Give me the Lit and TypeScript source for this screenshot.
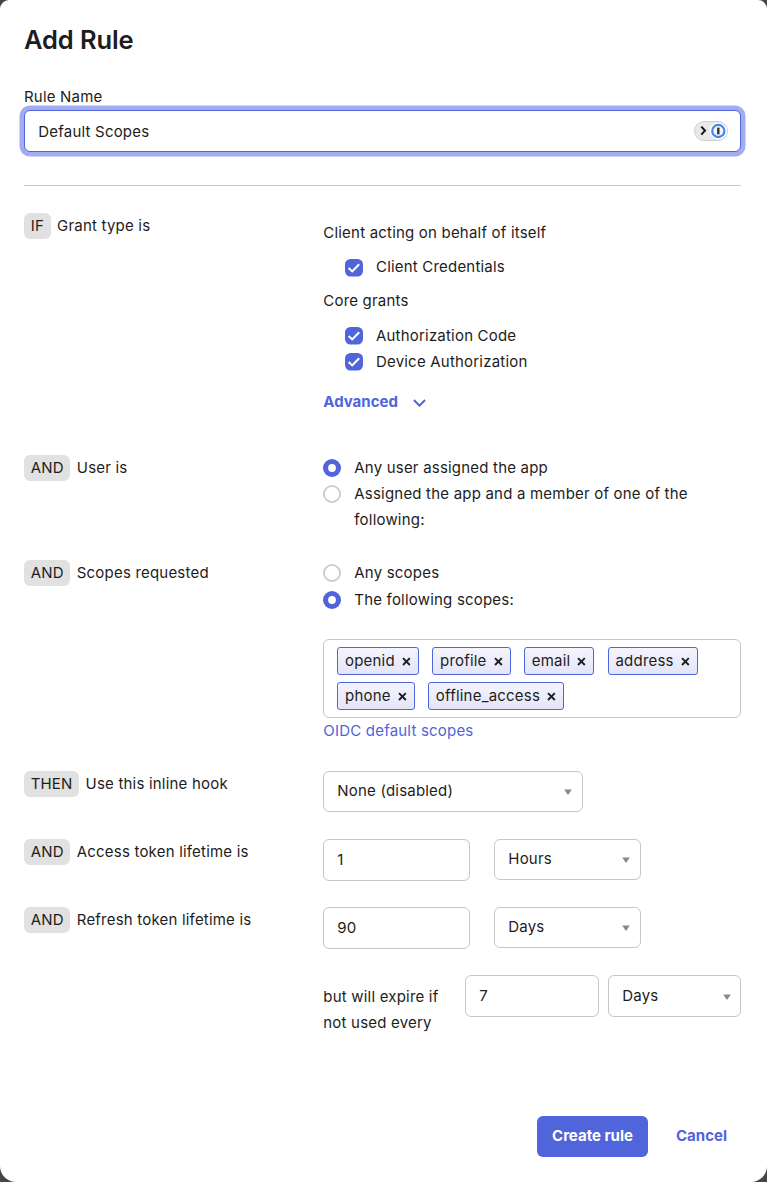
import { LitElement, html, css, svg } from "lit";
import { customElement } from "lit/decorators.js";

const check = html`<svg class="check" width="18" height="18" viewBox="0 0 18 18">
  <rect width="18" height="17.5" rx="5.5" fill="#5064dc" />
  <path d="M3.6 9 7.2 12.4 14.2 5.2" fill="none" stroke="#fff" stroke-width="2.1" />
</svg>`;

const radio = (on: boolean) => html`<svg class="radio" width="18" height="18" viewBox="0 0 18 18">
  ${on
    ? svg`<circle cx="9" cy="9" r="9" fill="#5064dc" /><circle cx="9" cy="9" r="3.9" fill="#fff" />`
    : svg`<circle cx="9" cy="9" r="8.1" fill="#fff" stroke="#cbcbcb" stroke-width="1.8" />`}
</svg>`;

const cross = html`<svg class="cross" width="9" height="9" viewBox="0 0 9 9">
  <path d="M1 1.2 7.8 8M7.8 1.2 1 8" stroke="#1d1d21" stroke-width="1.9" />
</svg>`;

const caret = html`<svg class="caret" width="8" height="6" viewBox="0 0 8 6"><path d="M.2 .5H7.8L4 6Z" fill="#888" /></svg>`;

@customElement("app-root")
export class AppRoot extends LitElement {
  static styles = css`
    :host {
      display: block;
      background: #454545;
      height: 1182px;
      overflow: hidden;
    }
    * {
      box-sizing: border-box;
    }
    .modal {
      height: 1182px;
      background: #fff;
      border-radius: 9px 9px 16px 16px;
      padding: 24px 26px 25px 24px;
      display: flex;
      flex-direction: column;
      color: #1d1d21;
      font: 400 15px/26px Inter, "Liberation Sans", sans-serif;
      letter-spacing: 0.2px;
      white-space: nowrap;
    }
    h1 {
      margin: 0;
      font-size: 25.5px;
      font-weight: 600;
      line-height: 32px;
      letter-spacing: -0.12px;
    }
    .name-label {
      margin-top: 28px;
      letter-spacing: 0.2px;
    }
    .field {
      display: flex;
      align-items: center;
      justify-content: space-between;
      border: 1px solid #c7c7c7;
      border-radius: 6px;
      height: 42px;
      padding: 0 10px 0 13.3px;
      background: #fff;
    }
    .name {
      border-color: #5064dc;
      box-shadow: 0 0 0 4.5px #a3acee;
      padding-right: 12px;
      letter-spacing: 0.2px;
      flex: none;
    }
    .name span {
      padding-top: 1px;
    }
    .rule {
      border-top: 1px solid #c9c9c9;
      margin-top: 33px;
      height: 28px;
      flex: none;
    }
    .row {
      display: grid;
      grid-template-columns: 299.3px 1fr;
      flex: none;
    }
    .grant { height: 242px; }
    .user { height: 105px; }
    .scopes { height: 211px; }
    .line { height: 68px; }
    .head {
      display: flex;
      align-items: flex-start;
      gap: 6.4px;
    }
    .badge {
      background: #e1e1e1;
      border-radius: 6px;
      padding: 0 6.8px;
      letter-spacing: 0.1px;
    }
    .col {
      display: flex;
      flex-direction: column;
      align-items: flex-start;
    }
    .client { margin-top: 7px; }
    .core { margin-top: 8px; }
    .opt {
      display: grid;
      grid-template-columns: 18px 1fr;
      column-gap: 13px;
    }
    .opt.box { padding-left: 21.7px; margin-top: 8px; }
    .opt.box.core-first { margin-top: 9px; }
    .opt.box.tight { margin-top: 0; }
    .opt.second { margin-top: 1px; }
    .check, .radio { display: block; margin-top: 4px; }
    .opt.first .check { margin-top: 5px; }
    .advanced {
      display: flex;
      align-items: center;
      gap: 15px;
      margin-top: 14px;
      color: #5064dc;
      font-weight: 700;
      letter-spacing: 0;
    }
    .advanced svg { margin-top: 1px; }
    .tags {
      width: 418px;
      height: 79px;
      margin: 26px 0 0 -0.3px;
      border: 1px solid #c7c7c7;
      border-radius: 6px;
      padding: 7px 13px;
      display: flex;
      flex-direction: column;
      gap: 7px;
    }
    .tagline { display: flex; gap: 13.2px; }
    .tag {
      display: flex;
      align-items: center;
      gap: 7px;
      height: 28px;
      padding: 0 7px;
      border: 1px solid #5064dc;
      border-radius: 3px;
      background: linear-gradient(#f4f4fe, #e4e5f8);
    }
    .cross { margin-top: 1px; }
    .link { color: #5064dc; }
    .cells { display: flex; align-items: flex-start; margin-left: -0.3px; }
    .select { height: 41px; }
    .select span { padding-bottom: 2px; }
    .caret { margin-top: 1px; }
    .w260 { width: 260px; }
    .w147 { width: 147px; }
    .w134 { width: 134px; }
    .w133 { width: 133px; height: 42px; padding-right: 9px; }
    .w133 span { padding-bottom: 0; }
    .gap { margin-left: 24px; }
    .gap9 { margin-left: 9px; }
    .expire { width: 142px; padding-top: 9px; padding-left: 0.3px; }
    .footer {
      margin-top: auto;
      display: flex;
      justify-content: flex-end;
      height: 41px;
      line-height: 40px;
      font-weight: 700;
      letter-spacing: 0;
    }
    .create {
      width: 111px;
      background: #5064dc;
      color: #fff;
      border-radius: 6px;
      text-align: center;
    }
    .cancel {
      color: #5064dc;
      width: 51px;
      margin: 0 14px 0 28px;
    }
  `;

  private head(badge: string, text: string) {
    return html`<div class="head"><span class="badge">${badge}</span><span>${text}</span></div>`;
  }

  private tag(name: string) {
    return html`<div class="tag"><span>${name}</span>${cross}</div>`;
  }

  private select(text: string, width: string) {
    return html`<div class="field select ${width}"><span>${text}</span>${caret}</div>`;
  }

  render() {
    return html`<div class="modal">
      <h1>Add Rule</h1>
      <div class="name-label">Rule Name</div>
      <div class="field name">
        <span>Default Scopes</span>
        <svg width="34" height="20" viewBox="0 0 34 20">
          <rect x=".5" y=".5" width="33" height="19" rx="9.5" fill="#e9e9e9" stroke="#cecece" />
          <path d="M7.3 5.6 11 9.6 7.3 13.6" fill="none" stroke="#111" stroke-width="2" />
          <circle cx="24.3" cy="10" r="8.6" fill="#fff" />
          <circle cx="24.3" cy="10" r="6.1" fill="#f5f5f5" stroke="#3d87f5" stroke-width="2.2" />
          <rect x="23.1" y="6.6" width="2.4" height="6.8" fill="#333" />
        </svg>
      </div>
      <div class="rule"></div>

      <div class="row grant">
        ${this.head("IF", "Grant type is")}
        <div class="col">
          <div class="client">Client acting on behalf of itself</div>
          <div class="opt box first">${check}<span>Client Credentials</span></div>
          <div class="core">Core grants</div>
          <div class="opt box core-first">${check}<span>Authorization Code</span></div>
          <div class="opt box tight">${check}<span>Device Authorization</span></div>
          <div class="advanced">
            <span>Advanced</span>
            <svg width="13" height="8" viewBox="0 0 13 8"><path d="M.9 1 6.5 6.6 12.1 1" fill="none" stroke="#5064dc" stroke-width="2" /></svg>
          </div>
        </div>
      </div>

      <div class="row user">
        ${this.head("AND", "User is")}
        <div class="col">
          <div class="opt">${radio(true)}<span>Any user assigned the app</span></div>
          <div class="opt">${radio(false)}<span>Assigned the app and a member of one of the<br />following:</span></div>
        </div>
      </div>

      <div class="row scopes">
        ${this.head("AND", "Scopes requested")}
        <div class="col">
          <div class="opt">${radio(false)}<span>Any scopes</span></div>
          <div class="opt second">${radio(true)}<span>The following scopes:</span></div>
          <div class="tags">
            <div class="tagline">${["openid", "profile", "email", "address"].map((t) => this.tag(t))}</div>
            <div class="tagline">${["phone", "offline_access"].map((t) => this.tag(t))}</div>
          </div>
          <div class="link">OIDC default scopes</div>
        </div>
      </div>

      <div class="row line">
        ${this.head("THEN", "Use this inline hook")}
        <div class="cells">${this.select("None (disabled)", "w260")}</div>
      </div>
      <div class="row line">
        ${this.head("AND", "Access token lifetime is")}
        <div class="cells">
          <div class="field w147">1</div>
          <div class="gap">${this.select("Hours", "w147")}</div>
        </div>
      </div>
      <div class="row line">
        ${this.head("AND", "Refresh token lifetime is")}
        <div class="cells">
          <div class="field w147">90</div>
          <div class="gap">${this.select("Days", "w147")}</div>
        </div>
      </div>
      <div class="row">
        <div></div>
        <div class="cells">
          <div class="expire">but will expire if<br />not used every</div>
          <div class="field w134">7</div>
          <div class="gap9">${this.select("Days", "w133")}</div>
        </div>
      </div>

      <div class="footer">
        <div class="create">Create rule</div>
        <div class="cancel">Cancel</div>
      </div>
    </div>`;
  }
}
